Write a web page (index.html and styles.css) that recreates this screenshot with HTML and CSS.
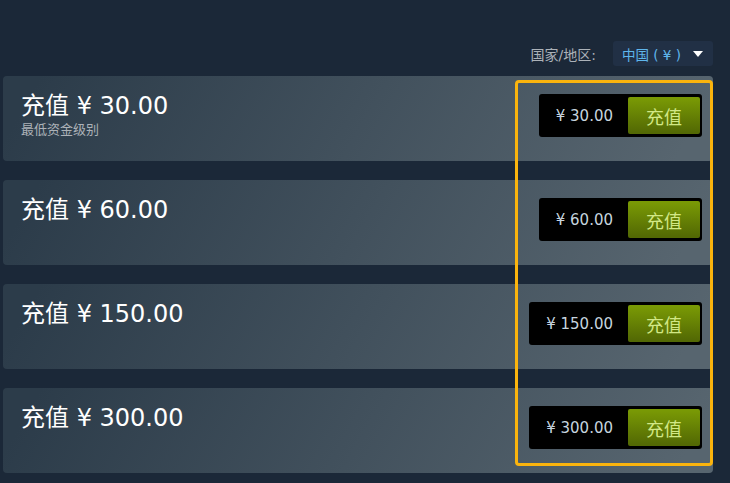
FILE: index.html
```html
<!DOCTYPE html>
<html lang="zh-CN">
<head>
    <meta charset="UTF-8">
    <title>充值</title>
    <link rel="stylesheet" href="styles.css">
</head>
<body>
    <div class="page">
        <div class="country">
            <span class="country-label">国家/地区:</span>
            <div class="country-select">
                <span>中国 ( ¥ )</span>
                <span class="arrow"></span>
            </div>
        </div>

        <div class="list">
            <div class="card">
                <div class="card-text">
                    <h2>充值 ¥ 30.00</h2>
                    <p>最低资金级别</p>
                </div>
                <div class="buy">
                    <span class="price">¥ 30.00</span>
                    <a class="btn-green">充值</a>
                </div>
            </div>
            <div class="card">
                <div class="card-text">
                    <h2>充值 ¥ 60.00</h2>
                </div>
                <div class="buy">
                    <span class="price">¥ 60.00</span>
                    <a class="btn-green">充值</a>
                </div>
            </div>
            <div class="card">
                <div class="card-text">
                    <h2>充值 ¥ 150.00</h2>
                </div>
                <div class="buy">
                    <span class="price">¥ 150.00</span>
                    <a class="btn-green">充值</a>
                </div>
            </div>
            <div class="card">
                <div class="card-text">
                    <h2>充值 ¥ 300.00</h2>
                </div>
                <div class="buy">
                    <span class="price">¥ 300.00</span>
                    <a class="btn-green">充值</a>
                </div>
            </div>

            <div class="highlight"></div>
        </div>
    </div>
</body>
</html>
```

FILE: styles.css
```css
body {
    margin: 0;
    background: #1b2838;
    font-family: "DejaVu Sans", "Noto Sans CJK SC", sans-serif;
    color: #fff;
    overflow: hidden;
}

.page {
    width: 710px;
    padding: 41px 0 0 3px;
}

.country {
    display: flex;
    justify-content: flex-end;
    align-items: center;
    gap: 17px;
    height: 25px;
}

.country-label {
    font-size: 14px;
    color: #acb2b8;
}

.country-select {
    display: flex;
    align-items: center;
    gap: 12px;
    height: 25px;
    padding: 0 10px 0 9px;
    background: #213045;
    border-radius: 3px;
    font-size: 13.5px;
    color: #5fb6ec;
}

.arrow {
    width: 0;
    height: 0;
    border-left: 5px solid transparent;
    border-right: 5px solid transparent;
    border-top: 6px solid #fff;
}

.list {
    position: relative;
    display: flex;
    flex-direction: column;
    gap: 19px;
    margin-top: 10px;
}

.card {
    display: flex;
    justify-content: space-between;
    align-items: flex-start;
    height: 85px;
    padding: 0 11px 0 18px;
    border-radius: 4px;
    background: linear-gradient(-60deg, #57656f 5%, #2c3c4a 95%);
    box-sizing: border-box;
}

.card-text h2 {
    margin: 15px 0 0;
    font-size: 24px;
    font-weight: normal;
    line-height: 31px;
    color: #fff;
}

.card-text p {
    margin: 0;
    font-size: 13px;
    line-height: 16px;
    color: #acb2b8;
}

.buy {
    display: flex;
    align-items: center;
    margin-top: 18px;
    padding: 3px 2px 3px 17px;
    background: #000;
    border-radius: 3px;
}

.price {
    font-size: 15px;
    color: #c6d4df;
    margin-right: 15px;
}

.btn-green {
    display: flex;
    align-items: center;
    justify-content: center;
    width: 72px;
    height: 37px;
    border-radius: 2px;
    background: linear-gradient(to bottom, #799905 5%, #536904 95%);
    color: #d2e885;
    font-size: 18px;
}

.highlight {
    position: absolute;
    left: 512px;
    top: 4px;
    width: 192px;
    height: 380px;
    border: 3px solid #fbb40d;
    border-radius: 4px;
    pointer-events: none;
}
```
